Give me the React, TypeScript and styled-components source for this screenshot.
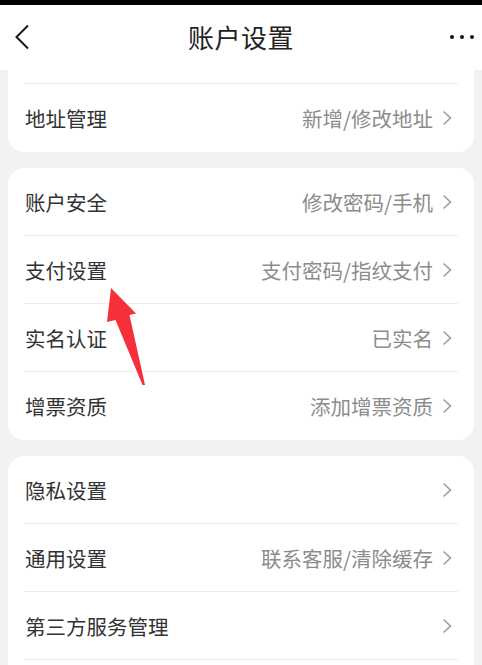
import React from 'react';
import styled, { createGlobalStyle } from 'styled-components';

// ─── Global ───────────────────────────────────────────────────────────────────

const GlobalStyle = createGlobalStyle`
  html, body {
    margin: 0;
    padding: 0;
    background: #f2f2f2;
  }
  body {
    font-family: "Noto Sans CJK SC", "Noto Sans", sans-serif;
  }
`;

// ─── Styled ───────────────────────────────────────────────────────────────────

const Screen = styled.div`
  position: relative;
  width: 482px;
  height: 665px;
  overflow: hidden;
  background: #f2f2f2;
  display: flex;
  flex-direction: column;
`;

const StatusStrip = styled.div`
  height: 5px;
  background: #000;
  flex-shrink: 0;
`;

const Header = styled.header`
  height: 65px;
  flex-shrink: 0;
  background: #fff;
  display: grid;
  grid-template-columns: 60px 1fr 60px;
  align-items: center;
  position: relative;
  z-index: 2;
`;

const BackButton = styled.div`
  display: flex;
  align-items: center;
  padding-left: 14px;
  padding-bottom: 2px;
`;

const Title = styled.h1`
  margin: 0;
  text-align: center;
  font-size: 26px;
  font-weight: 400;
  color: #222;
  letter-spacing: 0.5px;
  padding-bottom: 2px;
`;

const More = styled.div`
  display: flex;
  justify-content: flex-end;
  gap: 6px;
  padding-right: 8px;
  padding-bottom: 2px;
`;

const Dot = styled.span`
  width: 4px;
  height: 4px;
  border-radius: 50%;
  background: #111;
`;

const Scroll = styled.div`
  flex: 1;
  overflow: hidden;
`;

const List = styled.div`
  margin-top: -54px;
  padding: 0 8px;
  display: flex;
  flex-direction: column;
  gap: 16px;
`;

const Card = styled.section`
  background: #fff;
  border-radius: 16px;
  padding: 0 16px;
`;

const Row = styled.div<{ $divider: boolean }>`
  height: 68px;
  box-sizing: border-box;
  display: flex;
  align-items: center;
  justify-content: space-between;
  border-bottom: ${({ $divider }) => ($divider ? '1px solid #ededed' : 'none')};
`;

const Label = styled.span`
  font-size: 20.5px;
  color: #333;
  padding-left: 1px;
`;

const Side = styled.span`
  display: flex;
  align-items: center;
  gap: 9px;
  padding-right: 6px;
`;

const Value = styled.span`
  font-size: 20.5px;
  color: #8c8c8c;
`;

const ArrowLayer = styled.svg`
  position: absolute;
  left: 0;
  top: 0;
  pointer-events: none;
  z-index: 3;
`;

// ─── Data ─────────────────────────────────────────────────────────────────────

type Item = { label: string; value?: string };

// first and last rows sit under the header / below the fold
const groups: Item[][] = [
  [{ label: '' }, { label: '地址管理', value: '新增/修改地址' }],
  [
    { label: '账户安全', value: '修改密码/手机' },
    { label: '支付设置', value: '支付密码/指纹支付' },
    { label: '实名认证', value: '已实名' },
    { label: '增票资质', value: '添加增票资质' },
  ],
  [
    { label: '隐私设置' },
    { label: '通用设置', value: '联系客服/清除缓存' },
    { label: '第三方服务管理' },
    { label: '' },
  ],
];

// ─── Component ────────────────────────────────────────────────────────────────

const Chevron = () => (
  <svg width="10" height="16" viewBox="0 0 10 16">
    <path d="M1.5 1.5 L8.5 8 L1.5 14.5" fill="none" stroke="#9a9a9a" strokeWidth="1.5" />
  </svg>
);

export default function App() {
  return (
    <>
      <GlobalStyle />
      <Screen>
        <StatusStrip />
        <Header>
          <BackButton>
            <svg width="16" height="26" viewBox="0 0 16 26">
              <path d="M14 1.5 L2.5 13 L14 24.5" fill="none" stroke="#1a1a1a" strokeWidth="2" />
            </svg>
          </BackButton>
          <Title>账户设置</Title>
          <More>
            <Dot />
            <Dot />
            <Dot />
          </More>
        </Header>
        <Scroll>
          <List>
            {groups.map((items, gi) => (
              <Card key={gi}>
                {items.map((it, i) => (
                  <Row key={i} $divider={i < items.length - 1}>
                    <Label>{it.label}</Label>
                    <Side>
                      {it.value && <Value>{it.value}</Value>}
                      {it.label && <Chevron />}
                    </Side>
                  </Row>
                ))}
              </Card>
            ))}
          </List>
        </Scroll>
        <ArrowLayer width="482" height="665" viewBox="0 0 482 665">
          <path
            d="M111 288 L136 313.5 L129.5 315 L145 385 L142.5 385 L115.5 320 L107 322 Z"
            fill="#f5303a"
          />
        </ArrowLayer>
      </Screen>
    </>
  );
}
